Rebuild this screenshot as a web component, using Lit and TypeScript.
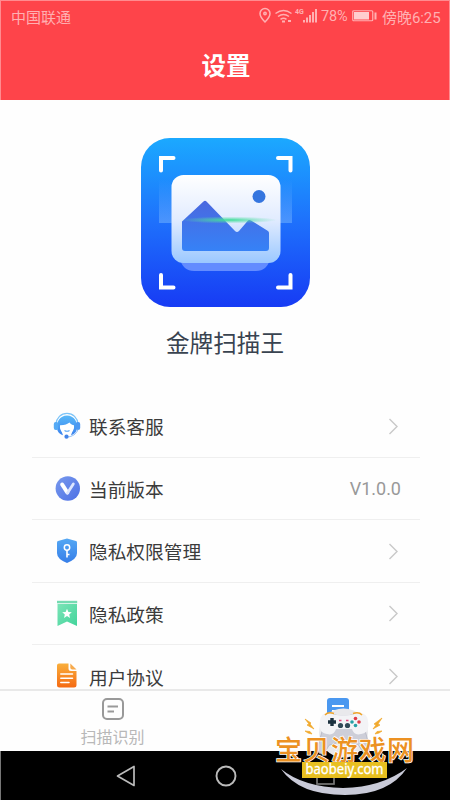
import { LitElement, html, css, svg } from "lit";
import { customElement } from "lit/decorators.js";

const icons = {
  service: svg`<defs><linearGradient id="a" x2="0" y2="1"><stop stop-color="#58b8f8"/><stop offset="1" stop-color="#3b83ee"/></linearGradient></defs>
    <path d="M3 12C3.500 6 8 1.300 14 1.300S24.500 6 25 12" fill="none" stroke="#7cc4f8" stroke-width="1.300"/>
    <path d="M4.500 18.500C2.500 10 7 3.500 14 3.500S25.500 10 23.500 18.500C22.500 21 20.500 22.500 18 23.200L21 15H7L10 23.200C7.500 22.500 5.500 21 4.500 18.500Z" fill="url(#a)"/>
    <rect x=".8" y="10" width="4.500" height="8" rx="2" fill="#55aaf5"/><rect x="22.700" y="10" width="4.500" height="8" rx="2" fill="#4b98f1"/>
    <path d="M7 13.200C11.500 13.300 14.500 12.200 16.500 10.500C18 12.500 19.500 13 21 13.200C21.500 18 18.500 22 14 22S6.500 18 7 13.200Z" fill="#fff"/>
    <path d="M11.500 18.500Q14 20 16.500 18.500" fill="none" stroke="#5aa8f5" stroke-width="1.100"/>
    <path d="M25 17.500C23.500 22 19 24.700 14.500 25" fill="none" stroke="#8bbcf5"/><circle cx="13.500" cy="24.700" r="2.100" fill="#4384e8"/>`,
  version: svg`<defs><linearGradient id="b" x2="1" y2="1"><stop stop-color="#7899ed"/><stop offset="1" stop-color="#4d70e5"/></linearGradient></defs>
    <circle cx="14.800" cy="14.500" r="12.200" fill="url(#b)"/><path d="M9.200 10.500L14.300 18.500" stroke="#fff" stroke-width="4" stroke-linecap="round"/><path d="M14.500 19L20.300 10" stroke="#dce5ff" stroke-width="2.800" stroke-linecap="round"/>`,
  shield: svg`<defs><linearGradient id="c" x2="0" y2="1"><stop stop-color="#55a8f4"/><stop offset="1" stop-color="#367ee8"/></linearGradient></defs>
    <path d="M14 1.500L23 4Q24 4.300 24 5.500V16Q24 22 14 26Q4 22 4 16V5.500Q4 4.300 5 4Z" fill="url(#c)"/>
    <circle cx="14" cy="10.500" r="2.700" fill="none" stroke="#fff" stroke-width="1.500"/><path d="M14 13V20.500M14 17.500H16.500" stroke="#fff" stroke-width="1.600"/>`,
  policy: svg`<defs><linearGradient id="d" x2="1" y2="1"><stop stop-color="#7be4b7"/><stop offset="1" stop-color="#43d49b"/></linearGradient></defs>
    <path d="M4.500 5H24V27L14 22.500L4.500 27Z" fill="url(#d)"/><path d="M4 1.800H24.200V4.300H4Z" fill="#75dbb2"/>
    <path d="M14 9.800L15.400 12.900L18.800 13.200L16.200 15.500L17 18.900L14 17.100L11 18.900L11.800 15.500L9.200 13.200L12.600 12.900Z" fill="#fff"/>`,
  agreement: svg`<defs><linearGradient id="e" x2="0" y2="1"><stop stop-color="#f9af3c"/><stop offset="1" stop-color="#f56a12"/></linearGradient></defs>
    <path d="M6 1.500H15.500V6.500Q15.500 9 18 9H23.500V23Q23.500 25.500 21 25.500H6.500Q4 25.500 4 23V3.500Q4 1.500 6 1.500Z" fill="url(#e)"/><path d="M17.300 1.500L23.500 7.500H19.300Q17.300 7.500 17.300 5.500Z" fill="#f7aa4c"/>
    <path d="M7.800 12H19.500M7.800 16.300H19.500M7.800 20.500H16" stroke="#fff" stroke-width="1.500" stroke-linecap="round"/>`,
};

const rows = [
  { icon: icons.service, label: "联系客服" },
  { icon: icons.version, label: "当前版本", value: "V1.0.0" },
  { icon: icons.shield, label: "隐私权限管理" },
  { icon: icons.policy, label: "隐私政策" },
  { icon: icons.agreement, label: "用户协议" },
];

@customElement("app-root")
export class AppRoot extends LitElement {
  static styles = css`
    :host { display: flex; flex-direction: column; position: relative; width: 450px; height: 800px; overflow: hidden; background: #fefefe; font-family: Roboto, "Noto Sans CJK SC", sans-serif; }
    * { box-sizing: border-box; }
    svg { display: block; flex: none; }
    .top { height: 100px; flex: none; background: #fe444a; border: solid #ff8b8f; border-width: 1px 1px 0; }
    .status { display: flex; align-items: center; height: 30px; padding: 0 7px 0 10px; color: #ffb0b2; font-size: 15px; }
    .carrier { flex: 1; }
    .signals { margin-right: 2px; }
    .percent { width: 28px; font-size: 14.500px; letter-spacing: -.1px; }
    .battery { margin: 0 4px 0 3px; }
    .clock { width: 60px; white-space: nowrap; font-size: 15px; letter-spacing: -.05px; }
    .title { height: 71px; line-height: 71px; padding-left: 2px; color: #fff; text-align: center; font-size: 24.500px; font-weight: 700; }
    .content { flex: 1; min-height: 0; overflow: hidden; padding: 38px 30px 0 32px; }
    .brand { display: flex; flex-direction: column; align-items: center; height: 257px; margin-right: 2px; }
    .name { height: 36px; line-height: 36px; margin-top: 19px; color: #394350; font-size: 23.600px; }
    .row { display: flex; align-items: center; height: 62.500px; padding: 0 18px 0 21px; border-bottom: 1px solid #efefef; }
    .row:last-child { border: 0; }
    .label { flex: 1; margin-left: 8px; font-size: 18.700px; color: #3b3b3b; }
    .value { color: #999; font-size: 18px; margin-right: 1px; }
    .arrow { margin-right: 3.500px; }
    .tabs { display: flex; height: 62px; flex: none; border-top: 2px solid #e9e9e9; background: #fefefe; }
    .tab { flex: 1; display: flex; flex-direction: column; align-items: center; padding-top: 6px; color: #b8b8b8; font-size: 16px; line-height: 24px; }
    .tab svg { margin-bottom: 4.500px; }
    .active { color: #4a98f0; }
    .nav { height: 49px; flex: none; display: grid; grid-template-columns: repeat(3, 100px); justify-content: center; align-items: center; justify-items: center; background: #000; border-left: 1px solid #777; }
    .mark { position: absolute; left: 270px; top: 700px; width: 150px; height: 100px; }
  `;

  render() {
    return html`
      <header class="top">
        <div class="status">
          <span class="carrier">中国联通</span>
          <svg class="signals" width="60" height="20" viewBox="0 0 60 20" fill="none" stroke="#ffb0b2" stroke-width="1.500">
            <path d="M6 16Q1 11 1 7.500A5 5 0 0 1 11 7.500Q11 11 6 16Z"/><circle cx="6" cy="7.500" r="1.200"/>
            <path d="M16.500 7.500Q24.500 1.500 32.500 7.500M19 10.500Q24.500 6.500 30 10.500M21.500 13.300Q24.500 11 27.500 13.300"/><path d="M23 15.500H26M29 15H32" stroke-width="2"/>
            <text x="36" y="7.500" font-size="7" font-weight="700" fill="#ffb0b2" stroke="none">4G</text>
            <path d="M45 14V16.500M48 11.500V16.500M51 9V16.500M54 6V16.500M57 3V16.500" stroke-width="2"/>
          </svg>
          <span class="percent">78%</span>
          <svg class="battery" width="26" height="12" viewBox="0 0 26 12"><rect x=".75" y=".75" width="20" height="10" rx="1" fill="none" stroke="#ffb0b2" stroke-width="1.200"/><rect x="2" y="2" width="15" height="7.500" fill="#ffcdce"/><rect x="22.500" y="2.500" width="2" height="7" fill="#ffb0b2"/></svg>
          <span class="clock">傍晚6:25</span>
        </div>
        <div class="title">设置</div>
      </header>
      <main class="content">
        <section class="brand">
          <svg width="169" height="169" viewBox="0 0 169 169">
            <defs>
              <linearGradient id="bg" x2="0" y2="1"><stop stop-color="#1ba9ff"/><stop offset=".5" stop-color="#1e70fc"/><stop offset="1" stop-color="#173bf4"/></linearGradient>
              <linearGradient id="card" x2="0" y2="1"><stop stop-color="#fff"/><stop offset=".5" stop-color="#e2ecff"/><stop offset="1" stop-color="#9bc8ff"/></linearGradient>
              <linearGradient id="hill" x2="0" y2="1"><stop stop-color="#4a68df"/><stop offset="1" stop-color="#3682f7"/></linearGradient>
              <linearGradient id="beam" x2="0" y2="1"><stop stop-color="#8cc7ff" stop-opacity="0"/><stop offset="1" stop-color="#8cc7ff" stop-opacity=".42"/></linearGradient>
              <radialGradient id="scan"><stop stop-color="#3dde98"/><stop offset="1" stop-color="#61dda9" stop-opacity="0"/></radialGradient>
            </defs>
            <rect width="169" height="169" rx="29" fill="url(#bg)"/>
            <rect x="18" y="41" width="133" height="44" fill="url(#beam)"/>
            <path d="M39 121H129Q126 133 115 133H53Q42 133 39 121Z" fill="#638cff"/>
            <rect x="30.500" y="37" width="109" height="88" rx="12" fill="url(#card)"/>
            <path d="M41 83.500L62.500 63.500Q64 62 65.500 63.500L94 93Q96 95 98 93L107 82.500Q108 81.500 110 82.500L127 93Q128 94 128 95V110Q128 113 125 113H44Q41 113 41 110Z" fill="url(#hill)"/>
            <circle cx="118" cy="58.500" r="6.500" fill="#3475df"/>
            <ellipse cx="88" cy="82" rx="48" ry="3.500" fill="url(#scan)"/>
            <path d="M20 32.500V20H32.500M137 20H149.500V32.500M20 137V149.500H32.500M137 149.500H149.500V137" fill="none" stroke="#fff" stroke-width="4" stroke-linecap="round"/>
          </svg>
          <div class="name">金牌扫描王</div>
        </section>
        <section>
          ${rows.map((r) => html`<div class="row">
            <svg width="28" height="28" viewBox="0 0 28 28" fill="none">${r.icon}</svg>
            <span class="label">${r.label}</span>
            ${r.value ? html`<span class="value">${r.value}</span>` : html`<svg class="arrow" width="12" height="18" viewBox="0 0 12 18" fill="none" stroke="#c9c9c9" stroke-width="1.400"><path d="M2.500 2L10 9.500L2.500 17"/></svg>`}
          </div>`)}
        </section>
      </main>
      <footer class="tabs">
        <div class="tab"><svg width="24" height="24" viewBox="0 0 24 24" fill="none" stroke="#999" stroke-width="2"><rect x="2" y="2" width="20" height="20" rx="4"/><path d="M6.500 9.500H17M6.500 14.500H13" stroke-width="1.800"/></svg><span>扫描识别</span></div>
        <div class="tab active"><svg width="24" height="24" viewBox="0 0 24 24" fill="none"><rect x="1" y="1" width="22" height="22" rx="3" fill="#4a98f0"/><path d="M6 9H18M6 14H13" stroke="#fff" stroke-width="2"/></svg><span>设置</span></div>
      </footer>
      <nav class="nav">
        <svg width="22" height="24" viewBox="0 0 22 24" fill="none" stroke="#bbb" stroke-width="1.700" stroke-linejoin="round"><path d="M19 2.500V21.500L2.500 12Z"/></svg>
        <svg width="24" height="24" viewBox="0 0 24 24" fill="none" stroke="#bbb" stroke-width="1.900"><circle cx="12" cy="12" r="9.500"/></svg>
        <svg width="22" height="22" viewBox="0 0 22 22" fill="none" stroke="#777" stroke-width="1.700"><rect x="2" y="2" width="17" height="17"/></svg>
      </nav>
      <svg class="mark" viewBox="0 0 150 100">
        <circle cx="73.500" cy="33" r="24.500" fill="#e9e9ec"/>
        <path d="M60 12Q73 17 87 12Q95 13 96.500 24L103.500 50Q104 59 98 58Q94 54 91 48Q74 41 57 48Q54 54 50 58Q43 59 44 50L51 24Q52 13 60 12Z" transform="translate(9.500 3.500) scale(.87)" fill="#cdced8" stroke="#adafbd" stroke-width=".8"/>
        <path d="M59 13Q73 18 88 13Q97 12 98 21Q100 33 91 34Q84 36 82 29H66Q64 36 57 34Q48 33 50 21Q51 12 59 13Z" fill="#f3f3f6"/>
        <path d="M55 15Q58 11.500 64 13.500M83 13.500Q89 11.500 92 15" fill="none" stroke="#efa42b" stroke-width="1.500"/>
        <path d="M62 18V26M58 22H66" stroke="#1b303e" stroke-width="3.400"/>
        <circle cx="85.500" cy="18.500" r="1.800" fill="#df3b48"/><circle cx="89" cy="22" r="1.800" fill="#df3b48"/><circle cx="85.500" cy="25.500" r="1.800" fill="#26a0a5"/><circle cx="82" cy="22" r="1.800" fill="#26a0a5"/>
        <path d="M69 20.500H71.500M76 20.500H78.500" stroke="#e4487c" stroke-width="1.500"/>
        <circle cx="70.500" cy="25.500" r="2.600" fill="#314a57"/><circle cx="77.500" cy="25.500" r="2.600" fill="#314a57"/>
        <path d="M35 19L41 23L40 24L44 29L37 25L39 24ZM35 31L40 31.500L42 34L38 33ZM112 18L104 24L106 25L103 29L110 25L108 24ZM112 31L107 31.500L105 34L109 33Z" fill="#f1a92d" stroke="#f1a92d" stroke-width=".7"/>
        <path d="M11 69Q33 87 73 88Q112 87 137 68Q119 95 75 95Q29 95 11 69Z" fill="#c9cad8"/>
        <text x="5" y="59.500" font-family="Noto Sans CJK SC" font-size="27" font-weight="500" textLength="139" fill="#ec9122" stroke="#fff" stroke-width="1.500" paint-order="stroke">宝贝游戏网</text>
        <rect x="32" y="62" width="85" height="16" fill="#e8bf20"/>
        <text x="35.500" y="74" font-family="Noto Sans" font-size="13.500" textLength="78" lengthAdjust="spacingAndGlyphs" fill="#fff" stroke="#fff" stroke-width=".3">baobeiy.com</text>
      </svg>`;
  }
}
